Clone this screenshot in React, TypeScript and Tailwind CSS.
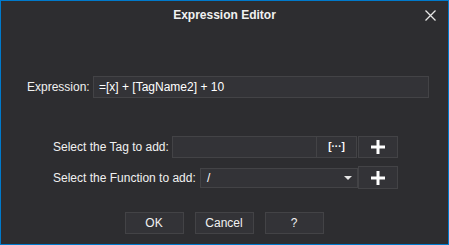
import React from 'react';

function PlusIcon() {
  return (
    <svg width="14" height="14" viewBox="0 0 14 14" fill="none">
      <path d="M7 0v14M0 7h14" stroke="#ffffff" strokeWidth={3} />
    </svg>);
}

function DialogButton({ label }: { label: string }) {
  return (
    <button className="w-[59px] h-[22px] bg-[#333337] border border-[#434346] text-[12px] text-[#f1f1f1] flex items-center justify-center">
      {label}
    </button>);
}

export default function App() {
  return (
    <div
      className="w-[449px] h-[245px] border border-[#007acc] bg-[#2d2d30] flex flex-col text-[#f1f1f1] overflow-hidden"
      style={{ fontFamily: '"Liberation Sans", Arial, sans-serif' }}>

      <div className="relative h-[27px] shrink-0 flex items-center justify-center">
        <span className="text-[12px] leading-[16px] font-bold text-[#f1f1f1]">Expression Editor</span>
        <button className="absolute right-[12px] top-[8px] w-[12px] h-[12px] flex items-center justify-center">
          <svg width="11" height="11" viewBox="0 0 11 11">
            <path d="M0.5 0.5l10 10M10.5 0.5l-10 10" stroke="#e6e6e6" strokeWidth={1.3} />
          </svg>
        </button>
      </div>

      <div className="mt-[48px] flex items-center pl-[26px] w-[428px] shrink-0">
        <span className="text-[12px] leading-[16px] w-[66px] shrink-0 whitespace-nowrap">Expression:</span>
        <div className="flex-1 h-[22px] bg-[#333337] border border-[#434346] flex items-center px-[5px] text-[12px] leading-[16px] text-white whitespace-nowrap">
          =[x] + [TagName2] + 10
        </div>
      </div>

      <div className="mt-[38px] flex items-center pl-[52px] w-[397px] shrink-0">
        <span className="text-[12px] leading-[16px] w-[119px] shrink-0 whitespace-nowrap">Select the Tag to add:</span>
        <div className="flex-1 h-[22px] bg-[#333337] border border-[#434346]"></div>
        <button className="w-[40px] h-[22px] shrink-0 bg-[#333337] border border-[#434346] border-l-0 flex items-center justify-center text-[10px] leading-[12px] font-bold text-white">
          [···]
        </button>
        <button className="w-[40px] h-[22px] shrink-0 ml-[1px] bg-[#333337] border border-[#434346] flex items-center justify-center">
          <PlusIcon />
        </button>
      </div>

      <div className="mt-[8px] flex items-center pl-[52px] w-[397px] shrink-0">
        <span className="text-[12px] leading-[16px] w-[147px] shrink-0 whitespace-nowrap">Select the Function to add:</span>
        <div className="flex-1 h-[20px] bg-[#333337] border border-[#434346] flex items-center justify-between pl-[6px] pr-[5px] text-[12px] leading-[16px] text-white">
          <span>/</span>
          <svg width="8" height="4" viewBox="0 0 8 4">
            <path d="M0 0h8L4 4z" fill="#e6e6e6" />
          </svg>
        </div>
        <button className="w-[40px] h-[23px] shrink-0 bg-[#333337] border border-[#434346] flex items-center justify-center">
          <PlusIcon />
        </button>
      </div>

      <div className="mt-[23px] flex justify-center gap-[11px] pr-[1px] shrink-0">
        <DialogButton label="OK" />
        <DialogButton label="Cancel" />
        <DialogButton label="?" />
      </div>
    </div>);
}
